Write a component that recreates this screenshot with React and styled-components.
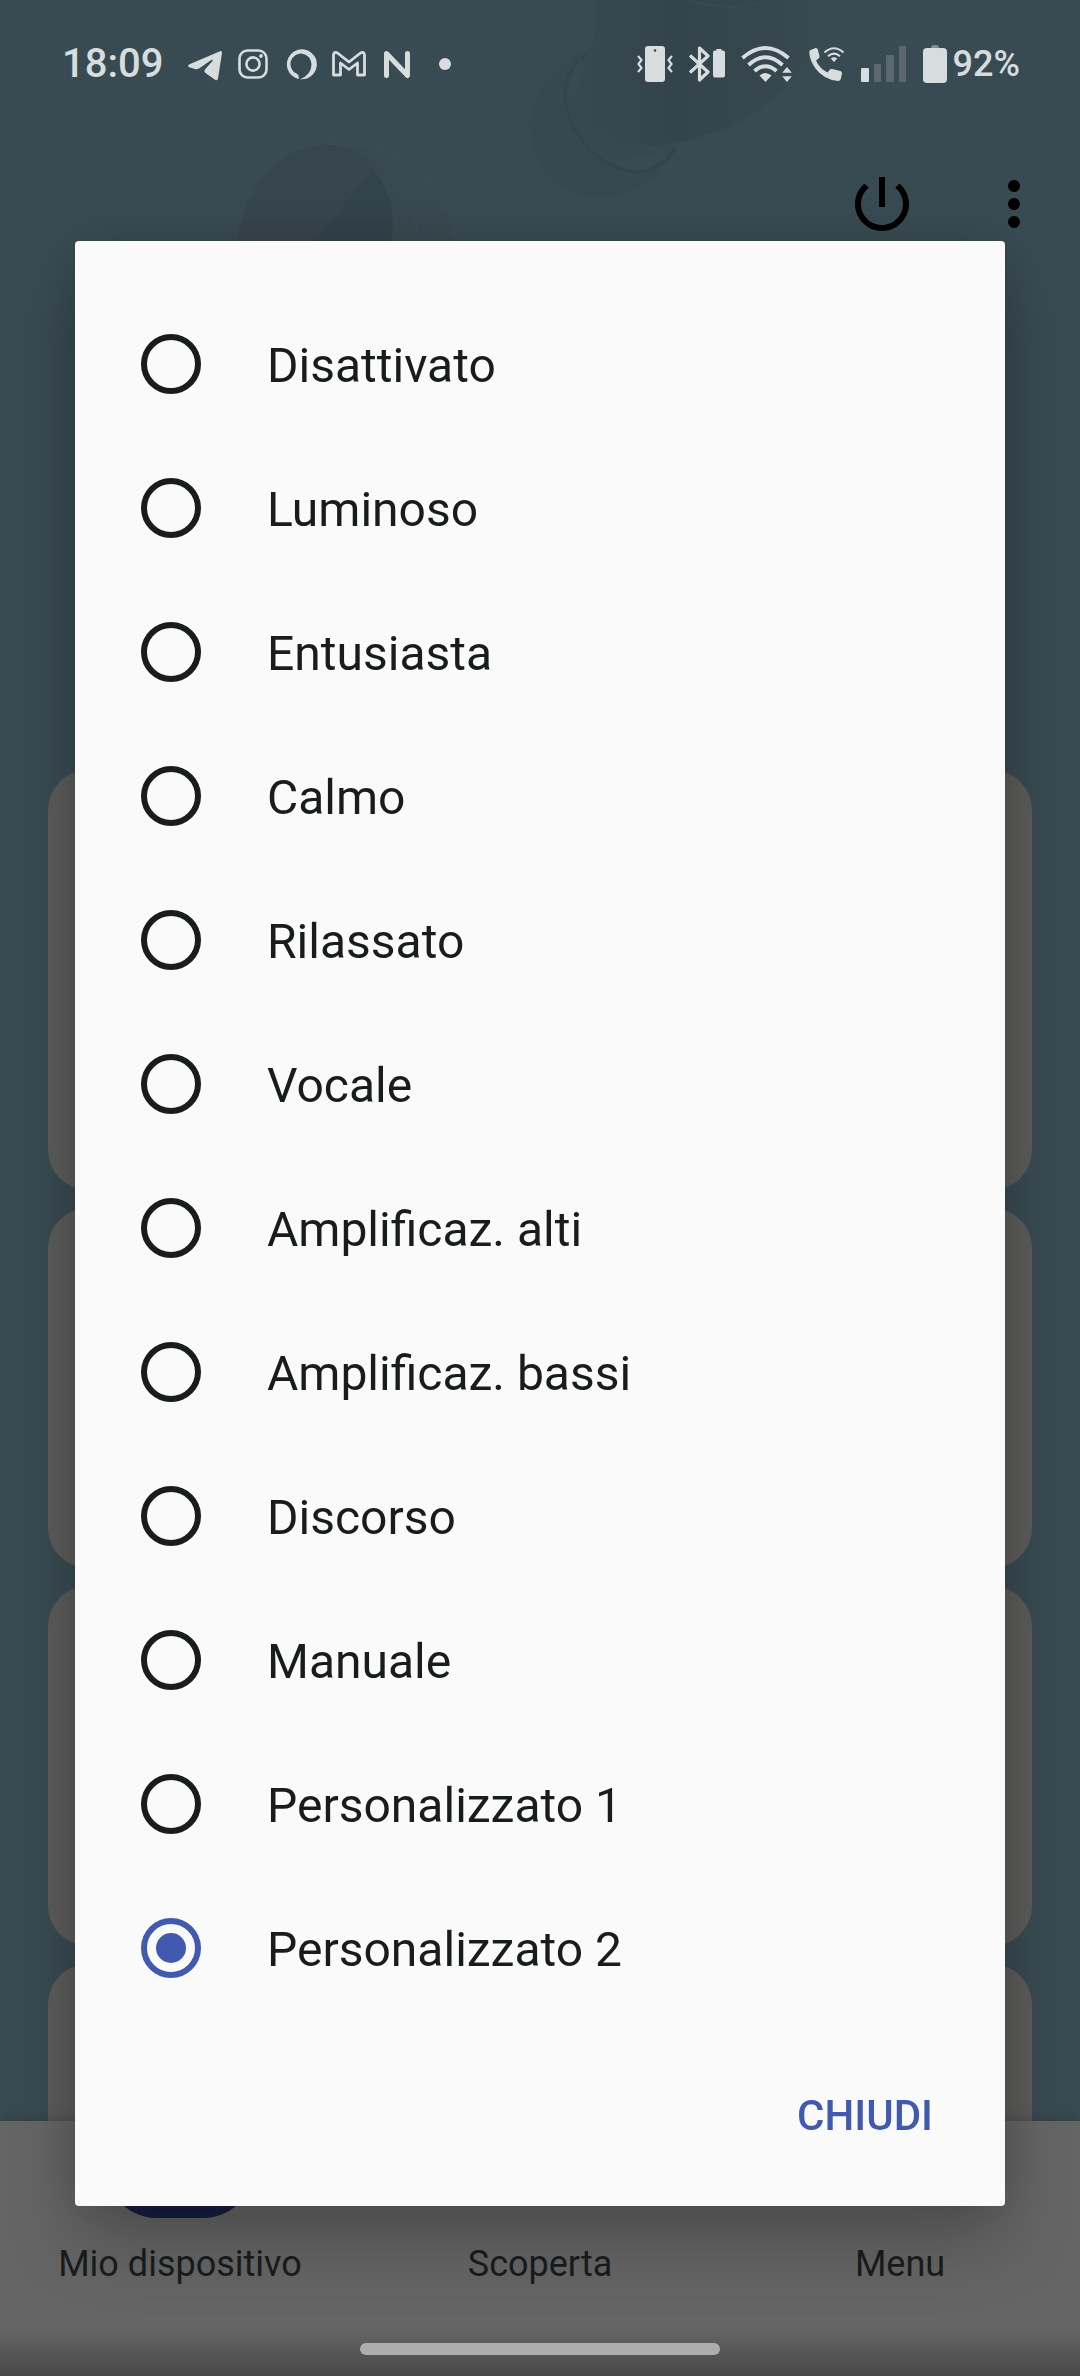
import React, { useState } from "react";
import styled, { createGlobalStyle } from "styled-components";

const GlobalStyle = createGlobalStyle`
  * {
    box-sizing: border-box;
  }

  body {
    margin: 0;
    background: #394b52;
    font-family: Roboto, "Liberation Sans", sans-serif;
  }
`;

const Screen = styled.div`
  position: relative;
  display: flex;
  flex-direction: column;
  height: 100vh;
  overflow: hidden;
  background: #394b52;
`;

const Backdrop = styled.svg`
  position: absolute;
  top: 0;
  left: 0;
`;

const StatusBar = styled.div`
  position: relative;
  display: flex;
  align-items: center;
  justify-content: space-between;
  height: 128px;
  padding: 0 60px 0 62px;
  color: #d7dcde;
`;

const StatusGroup = styled.div`
  display: flex;
  align-items: center;
  gap: ${(props) => props.$gap}px;
`;

const Clock = styled.span`
  font-size: 40px;
  font-weight: 500;
  line-height: 48px;
  margin-right: 12px;
`;

const Percent = styled.span`
  font-size: 36px;
  font-weight: 500;
  line-height: 40px;
`;

const BatteryGroup = styled.div`
  display: flex;
  align-items: center;
  gap: 6px;
`;

const Toolbar = styled.header`
  position: relative;
  display: flex;
  justify-content: flex-end;
  gap: 60px;
  padding: 40px 30px 0;
`;

const IconButton = styled.button`
  display: flex;
  padding: 0;
  border: 0;
  background: none;
  color: #000;
`;

const Content = styled.main`
  flex: 1;
  min-height: 0;
  overflow: hidden;
  display: flex;
  flex-direction: column;
  gap: 18px;
  padding: 530px 48px 0;
`;

const Card = styled.section`
  flex: none;
  height: ${(props) => (props.$tall ? 420 : 360)}px;
  border-radius: 40px;
  background: #5c5d5b;
`;

const BottomNav = styled.nav`
  position: relative;
  display: grid;
  grid-template-columns: repeat(3, 1fr);
  height: 255px;
  background: linear-gradient(#656565 0, #656565 208px, #484848 100%);
  box-shadow: 0 0 12px rgba(0, 0, 0, 0.2);
`;

const NavLink = styled.a`
  display: flex;
  flex-direction: column;
  align-items: center;
  gap: 24px;
  color: #191c1c;
  font-size: 36px;
  line-height: 44px;
  text-decoration: none;
`;

const Pill = styled.span`
  width: 144px;
  height: 97px;
  border-radius: 48px;
  background: ${(props) => (props.$active ? "#161e42" : "transparent")};
`;

const GestureBar = styled.div`
  position: absolute;
  left: 50%;
  bottom: 21px;
  width: 33.33%;
  height: 12px;
  border-radius: 6px;
  background: #adadad;
  transform: translateX(-50%);
`;

const Overlay = styled.div`
  position: fixed;
  inset: 0;
  display: flex;
  align-items: center;
  padding: 71px 75px 0;
`;

const Dialog = styled.form`
  flex: 1;
  padding-top: 51px;
  border-radius: 4px;
  background: #fafafa;
  box-shadow: 0 36px 72px rgba(0, 0, 0, 0.22), 0 0 48px rgba(0, 0, 0, 0.12);
`;

const Options = styled.fieldset`
  margin: 0;
  padding: 0;
  border: 0;
`;

const Option = styled.label`
  display: flex;
  align-items: center;
  gap: 66px;
  height: 144px;
  padding: 0 66px;
  color: #191c1c;
  font-size: 48px;
  line-height: 56px;
`;

const OptionText = styled.span`
  padding-top: 4px;
`;

const Radio = styled.input`
  appearance: none;
  display: grid;
  place-items: center;
  width: 60px;
  height: 60px;
  margin: 0;
  border: 6px solid #191c1c;
  border-radius: 50%;

  &:checked {
    border-color: #4259b0;
  }

  &:checked::before {
    content: "";
    width: 30px;
    height: 30px;
    border-radius: 50%;
    background: #4259b0;
  }
`;

const Actions = styled.div`
  display: flex;
  justify-content: flex-end;
  padding: 24px 48px 18px;
`;

const TextButton = styled.button`
  height: 144px;
  padding: 0 24px;
  border: 0;
  background: none;
  color: #4259b0;
  font-family: inherit;
  font-size: 42px;
  font-weight: 500;
  line-height: 48px;
`;

const presets = [
  "Disattivato",
  "Luminoso",
  "Entusiasta",
  "Calmo",
  "Rilassato",
  "Vocale",
  "Amplificaz. alti",
  "Amplificaz. bassi",
  "Discorso",
  "Manuale",
  "Personalizzato 1",
  "Personalizzato 2",
];

const TelegramIcon = () => (
  <svg width="36" height="36" viewBox="0 0 36 36" fill="currentColor">
    <path d="M2.5 18.2 33 5.2Q35.3 4.5 35 7L31 32.5Q30.3 35.2 28 33.7L18.5 27Q16.5 25.3 18.2 23.3L25.5 15Q26.5 13 24.3 14L12 22.5Q10 23.6 8 23L2 21.2Q0 19.7 2.5 18.2Z" />
  </svg>
);

const InstagramIcon = () => (
  <svg width="36" height="36" viewBox="0 0 36 36" fill="none" stroke="currentColor" strokeWidth="2.6">
    <rect x="4.5" y="4.5" width="27" height="27" rx="8" />
    <circle cx="18" cy="18" r="6.6" />
    <circle cx="26" cy="10" r="1.9" fill="currentColor" stroke="none" />
  </svg>
);

const AlexaIcon = () => (
  <svg width="36" height="36" viewBox="0 0 36 36" fill="currentColor">
    <path d="M15.800 33A15 15 0 1 1 17 33.200Q28.500 29 28.500 18A10.500 10.500 0 1 0 13.500 27.600Q16.300 28.600 15.800 33Z" />
  </svg>
);

const GmailIcon = () => (
  <svg width="36" height="36" viewBox="0 0 36 36" fill="none" stroke="currentColor" strokeWidth="2.8" strokeLinejoin="round">
    <path d="M2.500 29V9Q3 5 6.500 7L18 16 29.500 7Q33 5 33.500 9V29H26.500V17L18 23.500 9.500 17V29Z" />
  </svg>
);

const NIcon = () => (
  <svg width="36" height="36" viewBox="0 0 36 36" fill="none" stroke="currentColor" strokeWidth="5" strokeLinecap="round" strokeLinejoin="round">
    <path d="M7.5 29.500V7.500L28.500 29.500V7.500" />
  </svg>
);

const DotIcon = () => (
  <svg width="36" height="36" viewBox="0 0 36 36" fill="currentColor">
    <circle cx="18" cy="18" r="6" />
  </svg>
);

const VibrateIcon = () => (
  <svg width="36" height="36" viewBox="0 0 36 36">
    <path fill="currentColor" fillRule="evenodd" d="M11 0H25Q28 0 28 3V33Q28 36 25 36H11Q8 36 8 33V3Q8 0 11 0ZM18 3.2A1.3 1.3 0 1 0 18 5.8A1.3 1.3 0 1 0 18 3.2Z" />
    <path fill="none" stroke="currentColor" strokeWidth="2.2" d="M1 10 4.500 14 1.500 18 4.500 22 1 26M35 10 31.500 14 34.500 18 31.500 22 35 26" />
  </svg>
);

const BluetoothIcon = () => (
  <svg width="36" height="36" viewBox="0 0 36 36">
    <path fill="none" stroke="currentColor" strokeWidth="3.2" strokeLinejoin="round" d="M1 9.500 19 26 10.500 34V2L19 10 1 26.500" />
    <path fill="currentColor" d="M27.500 3H32.500V4.500H34Q36 4.500 36 6.500V29.500Q36 31.500 34 31.500H26Q24 31.500 24 29.500V6.500Q24 4.500 26 4.500H27.500Z" />
  </svg>
);

const WifiIcon = () => (
  <svg width="52" height="36" viewBox="0 0 52 36">
    <path fill="none" stroke="currentColor" strokeWidth="3.8" d="M1.500 12Q24.500-8 47.500 12M7.500 19Q24.500 3.500 41.500 19M13.500 25Q24.500 15.500 35.500 25" />
    <path fill="currentColor" d="M24.500 36 18.500 29.500Q24.500 24.500 30.500 29.500ZM46 21 50.800 26.800H41.200ZM46 36 50.800 30.200H41.200Z" />
  </svg>
);

const WifiCallIcon = () => (
  <svg width="36" height="36" viewBox="0 0 36 36">
    <path fill="currentColor" d="M1.500 4 6.500 2Q8.300 1.700 8.800 3.500L10.500 10Q10.800 11.600 9.300 12.700L7 14.500Q10.500 22.500 18.500 26.500L20.500 24Q21.600 22.700 23.200 23L31.500 25Q33.300 25.600 33 27.500L31.800 33Q31.200 35 29 35Q14.500 33.500 6.500 22.500Q1 15 .2 6.500Q.1 4.700 1.500 4Z" />
    <path fill="none" stroke="currentColor" strokeWidth="2" d="M15.500 6.500Q25-2 34.500 6.500M19 10.200Q25 5 31 10.200" />
    <path fill="currentColor" d="M25 16 21.800 12.500Q25 10 28.200 12.500Z" />
  </svg>
);

const SignalIcon = () => (
  <svg width="46" height="36" viewBox="0 0 46 36" fill="#5b686e">
    <rect x="0" y="22" width="8" height="14" rx="1" fill="currentColor" />
    <rect x="13" y="18" width="7" height="18" rx="1" />
    <rect x="25" y="9" width="8" height="27" rx="1" />
    <rect x="38" y="0" width="7" height="36" rx="1" />
  </svg>
);

const BatteryIcon = () => (
  <svg width="24" height="42" viewBox="0 0 24 42">
    <path fill="#818c90" d="M8 5Q8 2 11 2H13Q16 2 16 5Z" />
    <rect y="5" width="24" height="35" rx="4" fill="currentColor" />
  </svg>
);

const PowerIcon = () => (
  <svg width="72" height="72" viewBox="0 0 24 24" fill="currentColor">
    <path d="M13 3h-2v10h2V3zm4.83 2.17l-1.42 1.42C17.99 7.86 19 9.81 19 12c0 3.87-3.13 7-7 7s-7-3.13-7-7c0-2.19 1.01-4.14 2.58-5.42L6.17 5.17C4.23 6.82 3 9.26 3 12c0 4.97 4.03 9 9 9s9-4.03 9-9c0-2.74-1.23-5.18-3.17-6.83z" />
  </svg>
);

const MoreIcon = () => (
  <svg width="72" height="72" viewBox="0 0 24 24" fill="currentColor">
    <circle cx="12" cy="6" r="2" />
    <circle cx="12" cy="12" r="2" />
    <circle cx="12" cy="18" r="2" />
  </svg>
);

/* earbuds, barely visible behind the toolbar */
const Earbuds = () => (
  <Backdrop width="1080" height="420" viewBox="0 0 1080 420" aria-hidden="true">
    <defs>
      <linearGradient id="shell" x1="0" x2="1" y1="0" y2="0">
        <stop offset="0" stopColor="#374950" />
        <stop offset="0.35" stopColor="#34444b" />
        <stop offset="0.7" stopColor="#35464d" />
        <stop offset="1" stopColor="#394b52" />
      </linearGradient>
      <linearGradient id="dome" x1="0" x2="1" y1="0" y2="0">
        <stop offset="0" stopColor="#37484e" />
        <stop offset="1" stopColor="#38494f" />
      </linearGradient>
    </defs>
    <path fill="url(#dome)" d="M235 260Q236 205 268 170Q300 140 345 144Q400 150 432 190Q454 220 457 260Z" />
    <path fill="#37464c" d="M237 260Q238 205 268 172Q298 145 325 144Q355 146 374 170L298 260Z" />
    <path fill="#33434a" d="M374 170Q402 205 388 260H298Z" />
    <path fill="none" stroke="#3b4c53" strokeWidth="2" d="M325 144Q394 142 432 190M396 178Q416 205 418 240" />
    <path fill="#37484f" d="M592 48Q535 70 530 125Q535 195 600 198Q655 194 676 148Z" />
    <path fill="url(#shell)" d="M594 0Q600 28 588 54Q566 74 582 112Q600 146 660 146Q745 134 790 82Q820 52 836 0Z" />
    <path fill="none" stroke="#33454c" strokeWidth="3" d="M588 54Q550 80 575 130Q602 172 640 172Q664 168 676 147" />
    <path fill="#394a51" d="M608 160Q648 158 670 146Q660 170 638 171Q622 168 608 160ZM582 58Q568 72 569 98Q580 92 584 66Z" />
    <path fill="none" stroke="#38494f" strokeWidth="2" d="M690 0Q730 14 768 0M660 146Q745 134 790 82" />
  </Backdrop>
);

const App = () => {
  const [selected, setSelected] = useState("Personalizzato 2");

  return (
    <>
      <GlobalStyle />
      <Screen>
        <Earbuds />
        <StatusBar>
          <StatusGroup $gap={12}>
            <Clock>18:09</Clock>
            <TelegramIcon />
            <InstagramIcon />
            <AlexaIcon />
            <GmailIcon />
            <NIcon />
            <DotIcon />
          </StatusGroup>
          <StatusGroup $gap={16}>
            <VibrateIcon />
            <BluetoothIcon />
            <WifiIcon />
            <WifiCallIcon />
            <SignalIcon />
            <BatteryGroup>
              <BatteryIcon />
              <Percent>92%</Percent>
            </BatteryGroup>
          </StatusGroup>
        </StatusBar>

        <Toolbar>
          <IconButton type="button" aria-label="Spegni">
            <PowerIcon />
          </IconButton>
          <IconButton type="button" aria-label="Altro">
            <MoreIcon />
          </IconButton>
        </Toolbar>

        <Content>
          <Card $tall />
          <Card />
          <Card />
          <Card />
        </Content>

        <BottomNav>
          <NavLink href="#dispositivo">
            <Pill $active />
            Mio dispositivo
          </NavLink>
          <NavLink href="#scoperta">
            <Pill />
            Scoperta
          </NavLink>
          <NavLink href="#menu">
            <Pill />
            Menu
          </NavLink>
        </BottomNav>
      </Screen>

      <Overlay>
        <Dialog role="dialog" aria-label="Equalizzatore">
          <Options>
            {presets.map((name) => (
              <Option key={name}>
                <Radio
                  type="radio"
                  name="preset"
                  checked={selected === name}
                  onChange={() => setSelected(name)}
                />
                <OptionText>{name}</OptionText>
              </Option>
            ))}
          </Options>
          <Actions>
            <TextButton type="button">CHIUDI</TextButton>
          </Actions>
        </Dialog>
        <GestureBar />
      </Overlay>
    </>
  );
};

export default App;
